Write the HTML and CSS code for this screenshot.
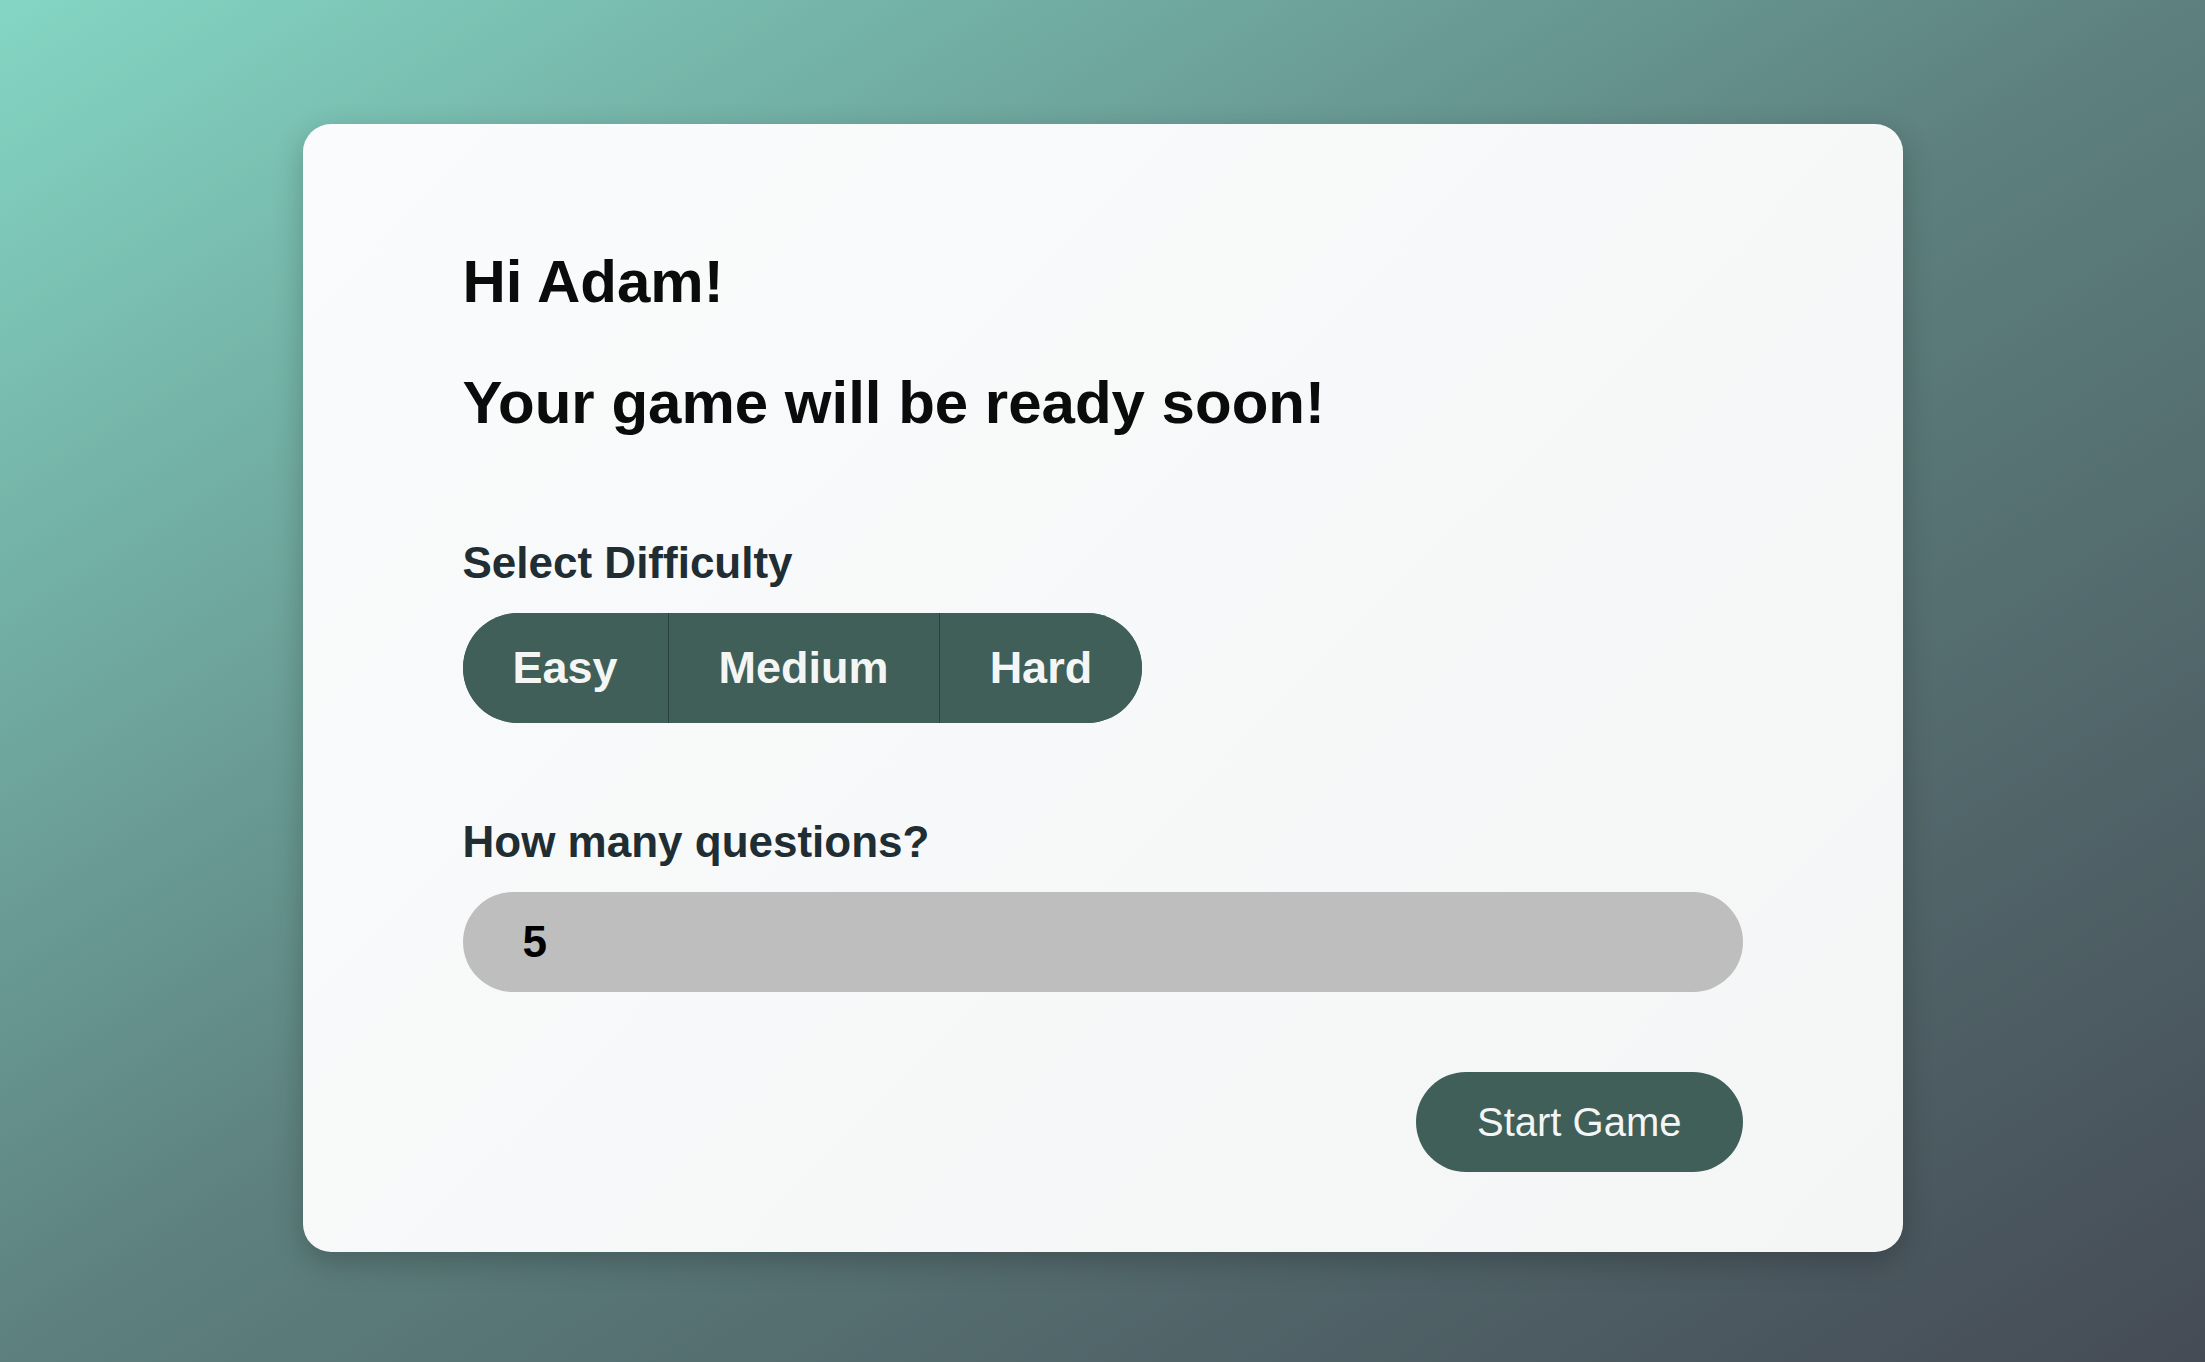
FILE: index.html
```html
<!DOCTYPE html>
<html lang="en">
<head>
<meta charset="utf-8">
<title>Quiz Setup</title>
<link rel="stylesheet" href="styles.css">
</head>
<body>
<main class="page">
  <section class="card">
    <h1 class="title">Hi Adam!</h1>
    <h1 class="title title-sub">Your game will be ready soon!</h1>

    <div class="field field-difficulty">
      <span class="field-label">Select Difficulty</span>
      <div class="segmented">
        <button class="segment" type="button">Easy</button>
        <button class="segment" type="button">Medium</button>
        <button class="segment" type="button">Hard</button>
      </div>
    </div>

    <div class="field field-count">
      <label class="field-label" for="count">How many questions?</label>
      <input class="count-input" id="count" type="text" value="5">
    </div>

    <div class="actions">
      <button class="start" type="button">Start Game</button>
    </div>
  </section>
</main>
</body>
</html>
```

FILE: styles.css
```css
* {
  box-sizing: border-box;
}

html,
body {
  margin: 0;
  min-height: 100%;
}

body {
  font-family: "Liberation Sans", Arial, sans-serif;
  min-height: 100vh;
  background: linear-gradient(to bottom right, #84d6c4 0%, #5d807e 50%, #454b55 100%);
}

.page {
  display: flex;
  justify-content: center;
  padding-top: 124px;
}

.card {
  width: 1600px;
  padding: 123px 160px 80px;
  border-radius: 28px;
  background: linear-gradient(135deg, #f9fbfc 0%, #f4f6f6 100%);
  box-shadow: 0 10px 30px rgba(0, 0, 0, 0.22);
}

.title {
  margin: 0;
  font-size: 60px;
  line-height: 70px;
  font-weight: 700;
  color: #0a0c0c;
}

.title-sub {
  margin-top: 51px;
}

.field {
  display: flex;
  flex-direction: column;
  align-items: flex-start;
}

.field-difficulty {
  margin-top: 100px;
}

.field-count {
  margin-top: 94px;
}

.field-label {
  display: block;
  font-size: 44px;
  line-height: 50px;
  font-weight: 700;
  color: #202e33;
  margin-bottom: 25px;
}

.segmented {
  display: flex;
  border-radius: 55px;
  overflow: hidden;
  background: #3f5f58;
}

.segment {
  font-family: "Liberation Sans", Arial, sans-serif;
  font-size: 45px;
  line-height: 50px;
  font-weight: 700;
  padding: 30px 50px;
  margin: 0;
  color: #f4f6f6;
  background: #3f5f58;
  border: 0;
  border-left: 1px solid #2b433e;
  cursor: pointer;
}

.segment:first-child {
  border-left: 0;
}

.count-input {
  display: block;
  width: 100%;
  height: 100px;
  margin: 0;
  border: 0;
  border-radius: 50px;
  background: #bdbebd;
  padding: 0 60px;
  font-family: "Liberation Sans", Arial, sans-serif;
  font-size: 44px;
  line-height: 50px;
  font-weight: 700;
  color: #000;
  outline: none;
}

.actions {
  display: flex;
  justify-content: flex-end;
  margin-top: 80px;
}

.start {
  height: 100px;
  padding: 0 61px;
  margin: 0;
  border: 0;
  border-radius: 50px;
  background: #3f5f58;
  color: #f4f6f6;
  font-family: "Liberation Sans", Arial, sans-serif;
  font-size: 40px;
  font-weight: 400;
  cursor: pointer;
}
```
